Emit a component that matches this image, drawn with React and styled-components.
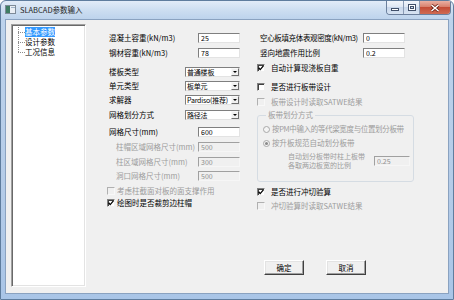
import React from 'react'
import styled, { createGlobalStyle } from 'styled-components'

const GlobalStyle = createGlobalStyle`
  html, body {
    margin: 0;
    padding: 0;
    width: 454px;
    height: 300px;
    overflow: hidden;
    background: #fff;
  }
  body {
    font-family: 'Noto Sans CJK SC', 'Liberation Sans', sans-serif;
    font-size: 7.5px;
    color: #000;
  }
  * {
    box-sizing: border-box;
  }
`

const Window = styled.div`
  width: 454px;
  height: 300px;
  display: flex;
  flex-direction: column;
  border: 1px solid #5f7d9e;
  border-radius: 6px 6px 0 0;
  background: linear-gradient(
    to bottom,
    #e2ecf8 0,
    #cddef1 9px,
    #bdd3ec 18px,
    #b5cce8 60%,
    #a9c5e7 100%
  );
  overflow: hidden;
`

const TitleBar = styled.div`
  height: 18px;
  flex: none;
  display: flex;
  align-items: flex-start;
  padding-left: 4px;
`

const AppIcon = styled.svg`
  margin-top: 4px;
  flex: none;
`

const Title = styled.span`
  margin: 4px 0 0 4px;
  line-height: 10px;
  color: #1e1e1e;
  white-space: nowrap;
`

const Caption = styled.div`
  margin-left: auto;
  margin-right: 2px;
  height: 14px;
  display: flex;
  border: 1px solid #6b7f9c;
  border-top: none;
  border-radius: 0 0 4px 4px;
  overflow: hidden;
`

const CapBtn = styled.div`
  width: ${p => p.$w}px;
  display: flex;
  align-items: center;
  justify-content: center;
  background: ${p =>
    p.$close
      ? 'linear-gradient(#eab0a3, #d8806c 45%, #c44d37 50%, #cf6a52)'
      : 'linear-gradient(#f1f5fb, #dfe8f4 45%, #c8d7eb 50%, #d7e3f2)'};
  & + & {
    border-left: 1px solid #8a9bb5;
  }
`

const Client = styled.div`
  flex: 1;
  margin: 0 4px 5px 4px;
  border: 1px solid #8aa2c0;
  background: #f0f0f0;
  display: flex;
  padding: 4px 0 6px 5px;
`

const Tree = styled.div`
  width: 75px;
  flex: none;
  background: #fff;
  border: 1px solid;
  border-color: #a0a0a0 #fff #fff #a0a0a0;
  box-shadow: inset 1px 1px 0 #696969, inset -1px -1px 0 #e3e3e3;
  padding: 2px 0 0 6px;
`

const TreeItem = styled.div`
  height: 10px;
  display: flex;
  align-items: stretch;
`

const Connector = styled.span`
  width: 7px;
  flex: none;
  background-image: repeating-linear-gradient(to bottom, #8c8c8c 0 1px, transparent 1px 2px),
    repeating-linear-gradient(to right, #8c8c8c 0 1px, transparent 1px 2px);
  background-size: 1px ${p => (p.$last ? '55%' : '100%')}, 100% 1px;
  background-position: 0 0, 0 55%;
  background-repeat: no-repeat;
`

const TreeText = styled.span`
  line-height: 10px;
  white-space: nowrap;
  background: ${p => (p.$selected ? '#3399ff' : 'transparent')};
  color: ${p => (p.$selected ? '#fff' : '#000')};
`

const Main = styled.div`
  flex: 1;
  margin-left: 21px;
  display: flex;
  flex-direction: column;
  padding-top: 9px;
`

const Columns = styled.div`
  display: flex;
  gap: 17px;
`

const Column = styled.div`
  width: ${p => p.$w}px;
  flex: none;
  display: flex;
  flex-direction: column;
`

const Row = styled.div`
  height: ${p => p.$h || 10}px;
  margin-top: ${p => p.$mt || 0}px;
  display: flex;
  align-items: center;
  gap: ${p => p.$gap || 0}px;
`

const Label = styled.span`
  ${p => (p.$w ? `width: ${p.$w}px; flex: none;` : 'flex: 1;')}
  padding-left: ${p => (p.$indent ? 9 : p.$pl ?? 2)}px;
  line-height: 10px;
  white-space: nowrap;
  letter-spacing: ${p => (p.$tight ? '-0.35px' : 'normal')};
  color: ${p => (p.$disabled ? '#9c9c9c' : '#000')};
`

const TextBox = styled.input`
  width: ${p => p.$w || 42}px;
  height: 10px;
  flex: none;
  margin: 0;
  padding: 0 2px;
  font-family: inherit;
  font-size: 7px;
  line-height: 8px;
  color: #000;
  background: #fff;
  border: 1px solid;
  border-color: #7f7f7f #e3e3e3 #e3e3e3 #7f7f7f;
  outline: none;

  &:disabled {
    background: #f0f0f0;
    color: #8f8f8f;
    border-color: #a0a0a0 #f6f6f6 #f6f6f6 #a0a0a0;
  }
`

const Select = styled.div`
  width: 55px;
  height: 10px;
  flex: none;
  display: flex;
  align-items: center;
  background: #fff;
  border: 1px solid;
  border-color: #7f7f7f #e3e3e3 #e3e3e3 #7f7f7f;
`

const SelectText = styled.span`
  flex: 1;
  min-width: 0;
  padding-left: 1px;
  font-size: 7px;
  line-height: 8px;
  letter-spacing: -0.2px;
  white-space: nowrap;
`

const DropButton = styled.span`
  width: 8px;
  height: 8px;
  flex: none;
  display: flex;
  align-items: center;
  justify-content: center;
  background: #f0f0f0;
  border: 1px solid;
  border-color: #f8f8f8 #6f6f6f #6f6f6f #f8f8f8;

  &::after {
    content: '';
    border-left: 2px solid transparent;
    border-right: 2px solid transparent;
    border-top: 2px solid #000;
  }
`

const Box = styled.span`
  width: 8px;
  height: 8px;
  flex: none;
  display: flex;
  align-items: center;
  justify-content: center;
  background: ${p => (p.$disabled ? '#f0f0f0' : '#fff')};
  border: 1px solid;
  border-color: ${p =>
    p.$disabled ? '#b0b0b0 #f8f8f8 #f8f8f8 #b0b0b0' : '#808080 #f0f0f0 #f0f0f0 #808080'};
  box-shadow: ${p => (p.$disabled ? 'none' : 'inset 1px 1px 0 #404040')};
`

const Radio = styled.span`
  width: 7px;
  height: 7px;
  flex: none;
  border-radius: 50%;
  border: 1px solid #a8a8a8;
  background: #f4f4f4;
  display: flex;
  align-items: center;
  justify-content: center;

  &::after {
    content: '';
    width: 3px;
    height: 3px;
    border-radius: 50%;
    background: ${p => (p.$checked ? '#8a8a8a' : 'transparent')};
  }
`

const Group = styled.fieldset`
  margin: 3px 0 0 0;
  padding: 0 0 11px 5px;
  min-width: 0;
  border: 1px solid #d5dce3;
  border-radius: 3px;
`

const Legend = styled.legend`
  margin-left: 3px;
  padding: 0 2px;
  line-height: 10px;
  color: #9c9c9c;
`

const TwoLine = styled.span`
  width: 86px;
  flex: none;
  margin-left: 25px;
  font-size: 7px;
  line-height: 9px;
  color: #9c9c9c;
  white-space: nowrap;
`

const Buttons = styled.div`
  margin-top: auto;
  margin-bottom: 12px;
  padding-left: 157px;
  display: flex;
  gap: 22px;
`

const Button = styled.button`
  width: 40px;
  height: 15px;
  padding: 0;
  font-family: inherit;
  font-size: 7.5px;
  color: #000;
  background: #f0f0f0;
  border: 1px solid;
  border-color: #fff #404040 #404040 #fff;
  box-shadow: inset -1px -1px 0 #a0a0a0, inset 1px 1px 0 #e3e3e3;
`

const Check = ({ checked, disabled }) => (
  <Box $disabled={disabled}>
    {checked && (
      <svg width="6" height="6" viewBox="0 0 6 6">
        <path d="M0.6 2.8 L2.2 4.6 L5.4 0.9" fill="none" stroke="#000" strokeWidth="1.3" />
      </svg>
    )}
  </Box>
)

const CheckRow = ({ mt, gap = 4, checked, disabled, children }) => (
  <Row $mt={mt} $gap={gap}>
    <Check checked={checked} disabled={disabled} />
    <Label $pl={0} $disabled={disabled}>{children}</Label>
  </Row>
)

const FieldRow = ({ mt, label, value, indent, disabled }) => (
  <Row $mt={mt}>
    <Label $indent={indent} $disabled={disabled}>{label}</Label>
    <TextBox value={value} readOnly disabled={disabled} />
  </Row>
)

const SelectRow = ({ mt, label, value }) => (
  <Row $mt={mt}>
    <Label>{label}</Label>
    <Select>
      <SelectText>{value}</SelectText>
      <DropButton />
    </Select>
  </Row>
)

const treeItems = ['基本参数', '设计参数', '工况信息']

export default function App() {
  return (
    <>
      <GlobalStyle />
      <Window>
        <TitleBar>
          <AppIcon width="11" height="9" viewBox="0 0 11 9">
            <rect x="0.5" y="0.5" width="10" height="8" fill="#e9eef4" stroke="#7d8a98" />
            <rect x="1" y="1" width="4" height="7" fill="#3f7d63" />
            <rect x="6" y="2" width="4" height="1" fill="#9fb3c8" />
          </AppIcon>
          <Title>SLABCAD参数输入</Title>
          <Caption>
            <CapBtn $w={16}>
              <svg width="8" height="6" viewBox="0 0 8 6">
                <rect x="0.5" y="3.5" width="7" height="2" fill="#fff" stroke="#41506a" />
              </svg>
            </CapBtn>
            <CapBtn $w={16}>
              <svg width="8" height="7" viewBox="0 0 8 7">
                <rect x="0.5" y="0.5" width="7" height="6" fill="none" stroke="#41506a" />
                <rect x="1.5" y="1.5" width="5" height="4" fill="none" stroke="#fff" />
                <rect x="2.5" y="2.5" width="3" height="2" fill="#cfdcec" stroke="#41506a" />
              </svg>
            </CapBtn>
            <CapBtn $w={31} $close>
              <svg width="10" height="8" viewBox="0 0 10 8">
                <path d="M1.5 1 L8.5 7 M8.5 1 L1.5 7" stroke="#6e2418" strokeWidth="3" />
                <path d="M1.5 1 L8.5 7 M8.5 1 L1.5 7" stroke="#fff" strokeWidth="1.5" />
              </svg>
            </CapBtn>
          </Caption>
        </TitleBar>

        <Client>
          <Tree>
            {treeItems.map((item, i) => (
              <TreeItem key={item}>
                <Connector $last={i === treeItems.length - 1} />
                <TreeText $selected={i === 0}>{item}</TreeText>
              </TreeItem>
            ))}
          </Tree>

          <Main>
            <Columns>
              <Column $w={133}>
                <FieldRow label="混凝土容重(kN/m3)" value="25" />
                <FieldRow mt={5} label="钢材容重(kN/m3)" value="78" />
                <SelectRow mt={9} label="楼板类型" value="普通楼板" />
                <SelectRow mt={4} label="单元类型" value="板单元" />
                <SelectRow mt={4} label="求解器" value="Pardiso(推荐)" />
                <SelectRow mt={5} label="网格划分方式" value="路径法" />
                <FieldRow mt={7} label="网格尺寸(mm)" value="600" />
                <FieldRow mt={5} indent disabled label="柱帽区域网格尺寸(mm)" value="500" />
                <FieldRow mt={5} indent disabled label="柱区域网格尺寸(mm)" value="300" />
                <FieldRow mt={4} indent disabled label="洞口网格尺寸(mm)" value="500" />
                <CheckRow mt={5} gap={2} disabled>考虑柱截面对板的面支撑作用</CheckRow>
                <CheckRow mt={2} gap={2} checked>绘图时是否裁剪边柱帽</CheckRow>
              </Column>

              <Column $w={157}>
                <Row>
                  <Label $w={106} $pl={3} $tight>空心板填充体表观密度(kN/m3)</Label>
                  <TextBox value="0" readOnly />
                </Row>
                <Row $mt={5}>
                  <Label $w={106} $pl={3}>竖向地震作用比例</Label>
                  <TextBox value="0.2" readOnly />
                </Row>
                <CheckRow mt={5} gap={6} checked>自动计算现浇板自重</CheckRow>
                <CheckRow mt={9} gap={6}>是否进行板带设计</CheckRow>
                <CheckRow mt={5} gap={6} disabled>板带设计时读取SATWE结果</CheckRow>

                <Group>
                  <Legend>板带划分方式</Legend>
                  <Row $mt={4} $gap={2}>
                    <Radio />
                    <Label $pl={0} $disabled $tight>按PM中输入的等代梁宽度与位置划分板带</Label>
                  </Row>
                  <Row $mt={4} $gap={2}>
                    <Radio $checked />
                    <Label $pl={0} $disabled>按升板规范自动划分板带</Label>
                  </Row>
                  <Row $mt={4} $h={18}>
                    <TwoLine>
                      自动划分板带时柱上板带
                      <br />
                      各取两边板宽的比例
                    </TwoLine>
                    <TextBox $w={36} value="0.25" readOnly disabled />
                  </Row>
                </Group>

                <CheckRow mt={5} gap={6} checked>是否进行冲切验算</CheckRow>
                <CheckRow mt={4} gap={6} disabled>冲切验算时读取SATWE结果</CheckRow>
              </Column>
            </Columns>

            <Buttons>
              <Button>确定</Button>
              <Button>取消</Button>
            </Buttons>
          </Main>
        </Client>
      </Window>
    </>
  )
}
